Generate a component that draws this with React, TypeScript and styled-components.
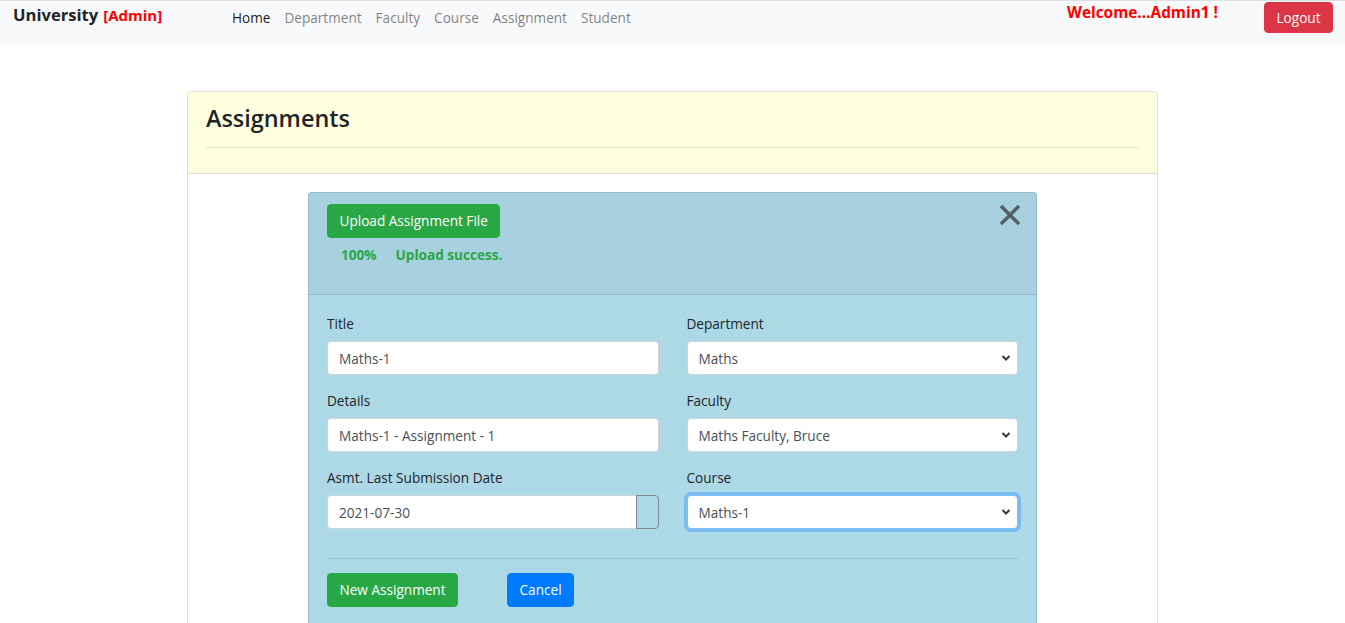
import React from "react";
import styled, { createGlobalStyle, css } from "styled-components";

const FONT = `"Open Sans", "Noto Sans", "Liberation Sans", sans-serif`;

const GlobalStyle = createGlobalStyle`
  * { box-sizing: border-box; }
  html, body { margin: 0; padding: 0; background: #fff; }
  body {
    font-family: ${FONT};
    font-size: 14px;
    line-height: 1.5;
    color: #212529;
  }
`;

const Navbar = styled.nav`
  display: flex;
  align-items: flex-start;
  height: 45px;
  padding: 0 12px 0 13px;
  background: #f8f9fa;
  border-top: 1px solid #dcdfe3;
`;

const Brand = styled.div`
  flex: 0 0 212px;
  margin-top: 3px;
  font-size: 16.6px;
  line-height: 22px;
  font-weight: 700;
  color: #212529;
  white-space: nowrap;
`;

const BrandTag = styled.span`
  margin-left: 5px;
  font-size: 15px;
  color: #ff0000;
`;

const NavList = styled.ul`
  display: flex;
  list-style: none;
  margin: 0;
  padding: 0;
`;

const NavLink = styled.a<{ $active?: boolean }>`
  display: block;
  padding: 6px 7px;
  font-size: 13.6px;
  line-height: 22px;
  text-decoration: none;
  color: ${(p) => (p.$active ? "rgba(0,0,0,0.9)" : "rgba(0,0,0,0.5)")};
`;

const Spacer = styled.div`
  flex: 1;
`;

const Welcome = styled.div`
  margin-top: 1px;
  margin-right: 46px;
  font-size: 15.4px;
  line-height: 22px;
  font-weight: 700;
  color: #ff0000;
`;

const Button = styled.button<{ $variant: "green" | "red" | "blue" }>`
  display: inline-flex;
  align-items: center;
  justify-content: center;
  height: 34px;
  padding: 0 11.5px;
  border: 1px solid transparent;
  border-radius: 4px;
  font-family: ${FONT};
  font-size: 13.6px;
  line-height: 1;
  color: #fff;
  cursor: pointer;
  ${(p) =>
    p.$variant === "green" &&
    css`
      background: #28a745;
      border-color: #28a745;
    `}
  ${(p) =>
    p.$variant === "red" &&
    css`
      background: #dc3545;
      border-color: #dc3545;
    `}
  ${(p) =>
    p.$variant === "blue" &&
    css`
      background: #007bff;
      border-color: #007bff;
    `}
`;

const LogoutButton = styled(Button)`
  height: 31px;
  width: 69px;
  margin-top: 1px;
`;

const Main = styled.main`
  padding-top: 46px;
`;

const Card = styled.section`
  width: 971px;
  margin: 0 auto;
  border: 1px solid rgba(0, 0, 0, 0.125);
  border-radius: 4px;
  overflow: hidden;
`;

const CardHeader = styled.header`
  height: 82px;
  padding: 11px 18px 0;
  background: #ffffe0;
  border-bottom: 1px solid rgba(0, 0, 0, 0.125);
`;

const Title = styled.h3`
  margin: 0;
  font-size: 23.4px;
  line-height: 30px;
  font-weight: 600;
  color: #212529;
`;

const Rule = styled.hr<{ $top: number }>`
  margin: ${(p) => p.$top}px 0 0;
  border: 0;
  border-top: 1px solid rgba(0, 0, 0, 0.1);
`;

const CardBody = styled.div`
  padding: 18px 18px 0;
`;

const Panel = styled.div`
  width: 729px;
  margin: 0 auto;
  background: #add8e6;
  border: 1px solid rgba(0, 0, 0, 0.125);
  border-radius: 4px 4px 0 0;
  border-bottom: 0;
`;

const PanelHeader = styled.div`
  position: relative;
  height: 102px;
  padding: 11px 18px 0;
  background: rgba(0, 0, 0, 0.03);
  border-bottom: 1px solid rgba(0, 0, 0, 0.125);
`;

const CloseButton = styled.button`
  position: absolute;
  top: 10px;
  right: 14px;
  width: 24px;
  height: 24px;
  padding: 0;
  border: 0;
  background: transparent;
  cursor: pointer;
`;

const Progress = styled.div`
  display: flex;
  gap: 19px;
  margin-top: 7px;
  padding-left: 14px;
  font-size: 13.6px;
  line-height: 20px;
  font-weight: 700;
  color: #28a745;
`;

const PanelBody = styled.div`
  padding: 18px 18px 24px;
`;

const FormGrid = styled.div`
  display: grid;
  grid-template-columns: 1fr 1fr;
  column-gap: 28px;
`;

const FormGroup = styled.div`
  margin-bottom: 15px;
`;

const Label = styled.label`
  display: block;
  margin-bottom: 6px;
  font-size: 13.6px;
  line-height: 22px;
  color: #212529;
`;

const controlBase = css`
  display: block;
  width: 100%;
  height: 34px;
  padding: 0 11px;
  background: #fff;
  border: 1px solid #ced4da;
  border-radius: 4px;
  font-family: ${FONT};
  font-size: 13.6px;
  color: #495057;
  outline: none;
`;

const Input = styled.input`
  ${controlBase}
`;

const InputGroup = styled.div`
  display: flex;
`;

const GroupInput = styled.input`
  ${controlBase}
  flex: 1;
  border-radius: 4px 0 0 4px;
  border-right: 0;
`;

const Addon = styled.span`
  flex: 0 0 23px;
  height: 34px;
  border: 1px solid #7d8a90;
  border-radius: 0 4px 4px 0;
`;

const SelectWrap = styled.div`
  position: relative;
`;

const Select = styled.select<{ $focused?: boolean }>`
  ${controlBase}
  appearance: none;
  -webkit-appearance: none;
  ${(p) =>
    p.$focused &&
    css`
      border-color: #80bdff;
      box-shadow: 0 0 0 3px rgba(0, 123, 255, 0.3);
    `}
`;

const Chevron = styled.svg`
  position: absolute;
  right: 7px;
  top: 13px;
  pointer-events: none;
`;

const Actions = styled.div`
  display: flex;
  gap: 49px;
  margin-top: 14px;
`;

const links = ["Home", "Department", "Faculty", "Course", "Assignment", "Student"];

function SelectField({ value, focused }: { value: string; focused?: boolean }) {
  return (
    <SelectWrap>
      <Select $focused={focused} defaultValue={value}>
        <option>{value}</option>
      </Select>
      <Chevron width="10" height="8" viewBox="0 0 10 8">
        <path d="M1.5 2 L5 5.5 L8.5 2" fill="none" stroke="#343a40" strokeWidth="2" />
      </Chevron>
    </SelectWrap>
  );
}

export default function App() {
  return (
    <>
      <GlobalStyle />
      <Navbar>
        <Brand>
          University<BrandTag>[Admin]</BrandTag>
        </Brand>
        <NavList>
          {links.map((l, i) => (
            <li key={l}>
              <NavLink href="#" $active={i === 0}>
                {l}
              </NavLink>
            </li>
          ))}
        </NavList>
        <Spacer />
        <Welcome>Welcome...Admin1 !</Welcome>
        <LogoutButton $variant="red">Logout</LogoutButton>
      </Navbar>
      <Main>
        <Card>
          <CardHeader>
            <Title>Assignments</Title>
            <Rule $top={14} />
          </CardHeader>
          <CardBody>
            <Panel>
              <PanelHeader>
                <Button $variant="green">Upload Assignment File</Button>
                <Progress>
                  <span>100%</span>
                  <span>Upload success.</span>
                </Progress>
                <CloseButton aria-label="close">
                  <svg width="24" height="24" viewBox="0 0 24 24">
                    <path d="M3 3 L21 21 M21 3 L3 21" stroke="#555f66" strokeWidth="3.6" />
                  </svg>
                </CloseButton>
              </PanelHeader>
              <PanelBody>
                <FormGrid>
                  <FormGroup>
                    <Label>Title</Label>
                    <Input defaultValue="Maths-1" />
                  </FormGroup>
                  <FormGroup>
                    <Label>Department</Label>
                    <SelectField value="Maths" />
                  </FormGroup>
                  <FormGroup>
                    <Label>Details</Label>
                    <Input defaultValue="Maths-1 - Assignment - 1" />
                  </FormGroup>
                  <FormGroup>
                    <Label>Faculty</Label>
                    <SelectField value="Maths Faculty, Bruce" />
                  </FormGroup>
                  <FormGroup>
                    <Label>Asmt. Last Submission Date</Label>
                    <InputGroup>
                      <GroupInput defaultValue="2021-07-30" />
                      <Addon />
                    </InputGroup>
                  </FormGroup>
                  <FormGroup>
                    <Label>Course</Label>
                    <SelectField value="Maths-1" focused />
                  </FormGroup>
                </FormGrid>
                <Rule $top={14} />
                <Actions>
                  <Button $variant="green">New Assignment</Button>
                  <Button $variant="blue">Cancel</Button>
                </Actions>
              </PanelBody>
            </Panel>
          </CardBody>
        </Card>
      </Main>
    </>
  );
}
